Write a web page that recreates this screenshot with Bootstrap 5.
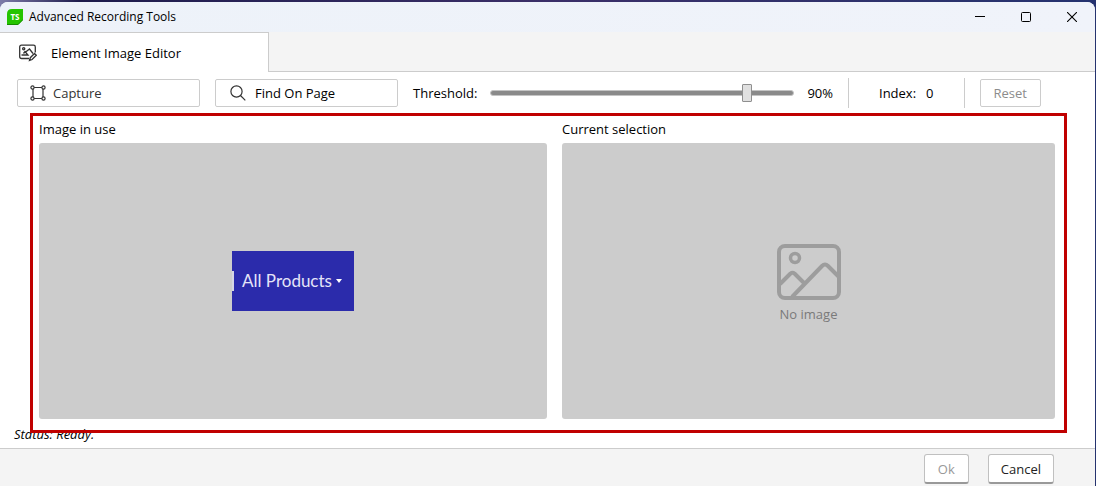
<!DOCTYPE html>
<html lang="en">
<head>
<meta charset="utf-8">
<meta name="viewport" content="width=device-width, initial-scale=1">
<title>Advanced Recording Tools</title>
<link href="https://cdn.jsdelivr.net/npm/bootstrap@5.3.0/dist/css/bootstrap.min.css" rel="stylesheet">
<style>
  body { font-family: "Open Sans", "Noto Sans", sans-serif; font-size: 13px; line-height: 18px; color: #000; background: linear-gradient(90deg, #7d7ba8 0, #1d1b4b 80px, #3b2f68 50%, #25336f 100%); }
  .app-window { min-height: 100vh; padding: 2px 1px 0 0; }
  .app-body { background: #fff; border-radius: 8px 8px 0 0; overflow: hidden; }
  .title-bar { height: 30px; background: linear-gradient(90deg, #edf2f9, #f0f3fa); font-size: 12px; padding-left: 7px; gap: 6px; }
  .win-btn { width: 46px; height: 30px; border: 0; background: none; padding: 0; }
  .tab-strip { background: #f4f4f4; border-bottom: 1px solid #ccc; height: 40px; }
  .tab-item { width: 269px; height: 40px; background: #fff; border: solid #ccc; border-width: 1px 1px 0 0; padding-left: 19px; gap: 14px; color: #000; text-decoration: none; }
  .toolbar { padding: 6px 0 5px 17px; gap: 15px; }
  .tool-btn { height: 28px; border: 1px solid #ccc; border-radius: 2px; background: #fff; color: #000; padding: 0 13px; }
  .tool-wide { width: 183px; padding: 0 12px; gap: 7px; }
  .tool-find { padding: 0 14px; gap: 9px; }
  .tool-capture { color: #333; }
  .tool-btn:disabled { color: #8c8c8c; }
  .threshold-group { gap: 13px; }
  .threshold { width: 304px; height: 20px; appearance: none; -webkit-appearance: none; background: none; margin: 0; }
  .threshold::-webkit-slider-runnable-track { height: 6px; border-radius: 3px; background: #8a8a8a; border: 1px solid #c4c4c4; }
  .threshold::-webkit-slider-thumb { -webkit-appearance: none; width: 10px; height: 18px; margin-top: -7px; background: #e0e0e0; border: 1px solid #8f8f8f; border-radius: 1px; }
  .divider { width: 1px; height: 30px; background: #ccc; }
  .index-group { gap: 10px; padding: 0 15px; }
  .frame { border: 3px solid #c00000; margin: 0 28px 0 30px; padding: 4px 9px 11px 6px; gap: 15px; z-index: 1; }
  .pane-used { flex: 508 1 0; }
  .pane-current { flex: 493 1 0; }
  .pane-title { margin-bottom: 5px; }
  .pane { background: #ccc; border-radius: 3px; color: #7a7a7a; }
  .no-image { gap: 5px; padding-top: 4px; }
  .snippet { width: 122px; height: 60px; background: #2b2bab; color: #e4e4f8; font-family: Lato, "Open Sans", sans-serif; font-size: 17px; gap: 4px; }
  .snippet-edge { width: 2px; height: 20px; background: #d5d5e5; margin-right: 4px; }
  .status { margin: -8px 0 5px 14px; font-style: italic; }
  .footer-bar { background: #f4f4f4; border-top: 1px solid #ccc; padding: 5px 41px 2px; gap: 19px; }
  .dlg-btn { height: 30px; border: 1px solid #c0c0c0; border-bottom: 2px solid #999; border-radius: 3px; background: #fff; color: #222; padding: 0 12px; }
  .dlg-btn:disabled { color: #999; padding: 0 13px; }
</style>
</head>
<body>
<div class="app-window d-flex flex-column">
  <div class="app-body d-flex flex-column flex-grow-1">
    <header class="title-bar d-flex align-items-center">
      <svg width="16" height="16" viewBox="0 0 16 16" aria-hidden="true"><path d="M5 0H16V11L11 16H0V5Q0 0 5 0Z" fill="#25c400"/><path d="M0 15.500H11L16 10.500" fill="none" stroke="#168a00"/><text x="8" y="11" text-anchor="middle" font-size="8" font-weight="700" fill="#fff">TS</text></svg>
      <span class="flex-grow-1">Advanced Recording Tools</span>
      <div class="d-flex">
        <button class="win-btn" aria-label="Minimize"><svg width="10" height="10" class="d-block mx-auto"><path d="M0 4.500H10" stroke="#000"/></svg></button>
        <button class="win-btn" aria-label="Maximize"><svg width="10" height="10" class="d-block mx-auto"><rect x=".5" y=".5" width="9" height="9" rx="1" fill="none" stroke="#000"/></svg></button>
        <button class="win-btn" aria-label="Close"><svg width="10" height="10" class="d-block mx-auto"><path d="M0 0L10 10M10 0L0 10" stroke="#000" stroke-width="1.100"/></svg></button>
      </div>
    </header>
    <nav class="tab-strip d-flex">
      <a href="#" class="tab-item d-flex align-items-center">
        <svg width="18" height="18" viewBox="0 0 18 18" fill="none" stroke="#333" stroke-width="1.300" aria-hidden="true"><path d="M10 14.500H2.500Q.7 14.500 .7 12.700V3Q.7 1.200 2.500 1.200H14.500Q16.300 1.200 16.300 3V8.500M2.500 11H9L6 7.500L4.500 9.500M6 8.500L10.500 5L14 9.500"/><circle cx="4.700" cy="4.700" r="1.100"/><path d="M10.500 16.500L11.300 13.700L15.500 9.500L17.300 11.300L13.100 15.500Z"/></svg>
        <span>Element Image Editor</span>
      </a>
    </nav>
    <div class="toolbar d-flex align-items-center">
      <button class="tool-btn tool-wide tool-capture d-flex align-items-center">
        <svg width="16" height="16" viewBox="0 0 16 16" fill="none" stroke="#333" stroke-width="1.200" aria-hidden="true"><path d="M4 2.500H12M4 13.500H12M3 4V12M13 4V12"/><g fill="#fff"><circle cx="2.500" cy="2.500" r="1.600"/><circle cx="13.500" cy="2.500" r="1.600"/><circle cx="2.500" cy="13.500" r="1.600"/><circle cx="13.500" cy="13.500" r="1.600"/></g></svg>Capture</button>
      <button class="tool-btn tool-wide tool-find d-flex align-items-center">
        <svg width="16" height="16" viewBox="0 0 16 16" fill="none" stroke="#333" stroke-width="1.200" aria-hidden="true"><circle cx="6.500" cy="6.500" r="5.600"/><path d="M10.500 10.500L15.300 15.300"/></svg>Find On Page</button>
      <div class="threshold-group d-flex align-items-center">
        <label for="threshold">Threshold:</label>
        <input id="threshold" class="threshold" type="range" min="30" max="100" value="90">
        <output for="threshold">90%</output>
      </div>
      <span class="divider"></span>
      <div class="index-group d-flex"><span>Index:</span><span>0</span></div>
      <span class="divider"></span>
      <button class="tool-btn" disabled>Reset</button>
    </div>
    <main class="frame d-flex flex-grow-1 position-relative">
      <section class="pane-used d-flex flex-column">
        <div class="pane-title">Image in use</div>
        <div class="pane flex-grow-1 d-flex align-items-center justify-content-center">
          <div class="snippet d-flex align-items-center"><span class="snippet-edge"></span><span>All Products</span><svg width="6" height="4" aria-hidden="true"><path d="M0 0H6L3 4Z" fill="#fff"/></svg></div>
        </div>
      </section>
      <section class="pane-current d-flex flex-column">
        <div class="pane-title">Current selection</div>
        <div class="pane no-image flex-grow-1 d-flex flex-column align-items-center justify-content-center">
          <svg width="64" height="56" viewBox="0 0 64 56" fill="none" stroke="#9d9d9d" stroke-width="4" stroke-linejoin="round" aria-hidden="true"><rect x="2" y="2" width="60" height="52" rx="6"/><circle cx="18" cy="14" r="4.500" stroke-width="3.500"/><path d="M3 40L13.500 29.500Q15.500 28 17.500 29.500L27 39M15 53L45 22Q48 19 51 22L62 33"/></svg>
          <div>No image</div>
        </div>
      </section>
    </main>
    <div class="status">Status: Ready.</div>
    <footer class="footer-bar d-flex justify-content-end">
      <button class="dlg-btn" disabled>Ok</button>
      <button class="dlg-btn">Cancel</button>
    </footer>
  </div>
</div>
<script src="https://cdn.jsdelivr.net/npm/bootstrap@5.3.0/dist/js/bootstrap.bundle.min.js"></script>
</body>
</html>
